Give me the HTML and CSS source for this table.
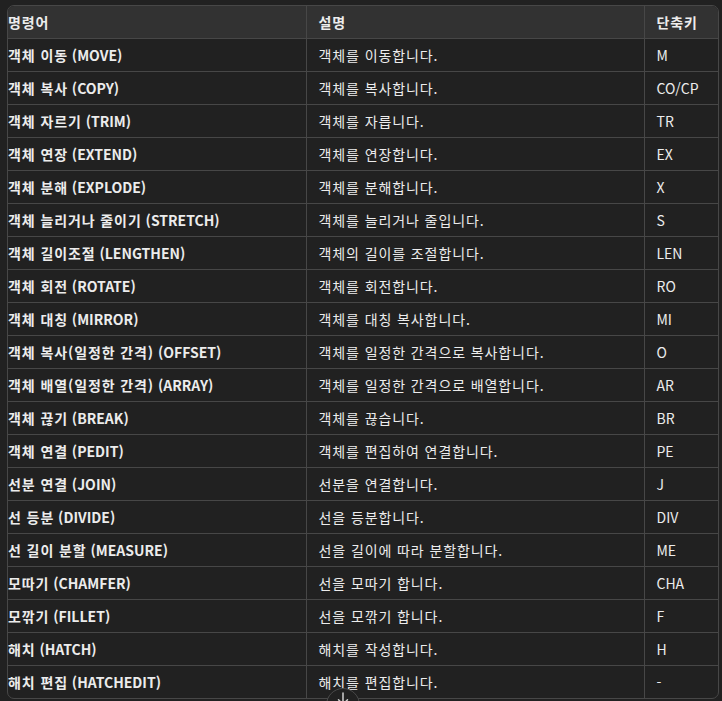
FILE: index.html
```html
<!DOCTYPE html>
<html lang="ko">
<head>
<meta charset="utf-8">
<title>명령어 표</title>
<link rel="stylesheet" href="styles.css">
</head>
<body>
<div class="wrap">
  <table class="cmd">
    <colgroup><col class="c1"><col class="c2"><col class="c3"></colgroup>
    <thead>
      <tr><th class="ko">명령어</th><th class="ko">설명</th><th class="ko">단축키</th></tr>
    </thead>
    <tbody>
      <tr><td><span class="ko">객체 이동</span> (MOVE)</td><td class="ko">객체를 이동합니다.</td><td>M</td></tr>
      <tr><td><span class="ko">객체 복사</span> (COPY)</td><td class="ko">객체를 복사합니다.</td><td>CO/CP</td></tr>
      <tr><td><span class="ko">객체 자르기</span> (TRIM)</td><td class="ko">객체를 자릅니다.</td><td>TR</td></tr>
      <tr><td><span class="ko">객체 연장</span> (EXTEND)</td><td class="ko">객체를 연장합니다.</td><td>EX</td></tr>
      <tr><td><span class="ko">객체 분해</span> (EXPLODE)</td><td class="ko">객체를 분해합니다.</td><td>X</td></tr>
      <tr><td><span class="ko">객체 늘리거나 줄이기</span> (STRETCH)</td><td class="ko">객체를 늘리거나 줄입니다.</td><td>S</td></tr>
      <tr><td><span class="ko">객체 길이조절</span> (LENGTHEN)</td><td class="ko">객체의 길이를 조절합니다.</td><td>LEN</td></tr>
      <tr><td><span class="ko">객체 회전</span> (ROTATE)</td><td class="ko">객체를 회전합니다.</td><td>RO</td></tr>
      <tr><td><span class="ko">객체 대칭</span> (MIRROR)</td><td class="ko">객체를 대칭 복사합니다.</td><td>MI</td></tr>
      <tr><td><span class="ko">객체 복사(일정한 간격)</span> (OFFSET)</td><td class="ko">객체를 일정한 간격으로 복사합니다.</td><td>O</td></tr>
      <tr><td><span class="ko">객체 배열(일정한 간격)</span> (ARRAY)</td><td class="ko">객체를 일정한 간격으로 배열합니다.</td><td>AR</td></tr>
      <tr><td><span class="ko">객체 끊기</span> (BREAK)</td><td class="ko">객체를 끊습니다.</td><td>BR</td></tr>
      <tr><td><span class="ko">객체 연결</span> (PEDIT)</td><td class="ko">객체를 편집하여 연결합니다.</td><td>PE</td></tr>
      <tr><td><span class="ko">선분 연결</span> (JOIN)</td><td class="ko">선분을 연결합니다.</td><td>J</td></tr>
      <tr><td><span class="ko">선 등분</span> (DIVIDE)</td><td class="ko">선을 등분합니다.</td><td>DIV</td></tr>
      <tr><td><span class="ko">선 길이 분할</span> (MEASURE)</td><td class="ko">선을 길이에 따라 분할합니다.</td><td>ME</td></tr>
      <tr><td><span class="ko">모따기</span> (CHAMFER)</td><td class="ko">선을 모따기 합니다.</td><td>CHA</td></tr>
      <tr><td><span class="ko">모깎기</span> (FILLET)</td><td class="ko">선을 모깎기 합니다.</td><td>F</td></tr>
      <tr><td><span class="ko">해치</span> (HATCH)</td><td class="ko">해치를 작성합니다.</td><td>H</td></tr>
      <tr><td><span class="ko">해치 편집</span> (HATCHEDIT)</td><td class="ko">해치를 편집합니다.</td><td>-</td></tr>
    </tbody>
  </table>
</div>
<button class="scroll-down" aria-label="맨 아래로 스크롤">
  <svg width="18" height="18" viewBox="0 0 24 24" fill="none" stroke="#d0d0d0" stroke-width="2" stroke-linecap="round" stroke-linejoin="round"><path d="M12 4v15"/><path d="M6 13l6 6 6-6"/></svg>
</button>
</body>
</html>
```

FILE: styles.css
```css
html, body {
  margin: 0;
  padding: 0;
  background: #212121;
  height: 100%;
  overflow: hidden;
}
body {
  font-family: "Noto Sans CJK KR", "Noto Sans", sans-serif;
  font-size: 14px;
  color: #ececec;
}
.wrap {
  margin: 5px 0 0 7px;
  width: 712px;
  border: 1px solid #474747;
  border-radius: 7px;
  overflow: hidden;
  box-sizing: border-box;
}
.cmd {
  width: 100%;
  border-collapse: collapse;
  table-layout: fixed;
}
.c1 { width: 298px; }
.c2 { width: 338px; }
.c3 { width: auto; }
.cmd th, .cmd td {
  height: 32px;
  padding: 0 12px;
  text-align: left;
  vertical-align: middle;
  line-height: 20px;
  white-space: nowrap;
  border-left: 1px solid #474747;
  border-bottom: 1px solid #474747;
}
.cmd th:first-child, .cmd td:first-child {
  padding-left: 0;
  border-left: none;
}
.cmd th {
  background: #323232;
  font-weight: 700;
}
.cmd td:first-child {
  font-weight: 700;
}
.cmd tbody tr:last-child td {
  border-bottom: none;
}
.ko {
  letter-spacing: 0.9px;
}
.scroll-down {
  position: absolute;
  left: 326px;
  top: 688px;
  width: 34px;
  height: 34px;
  border-radius: 50%;
  border: 1px solid #4a4a4a;
  background: #212121;
  padding: 1px 0 0;
  display: flex;
  align-items: flex-start;
  justify-content: center;
  box-sizing: border-box;
}
```
